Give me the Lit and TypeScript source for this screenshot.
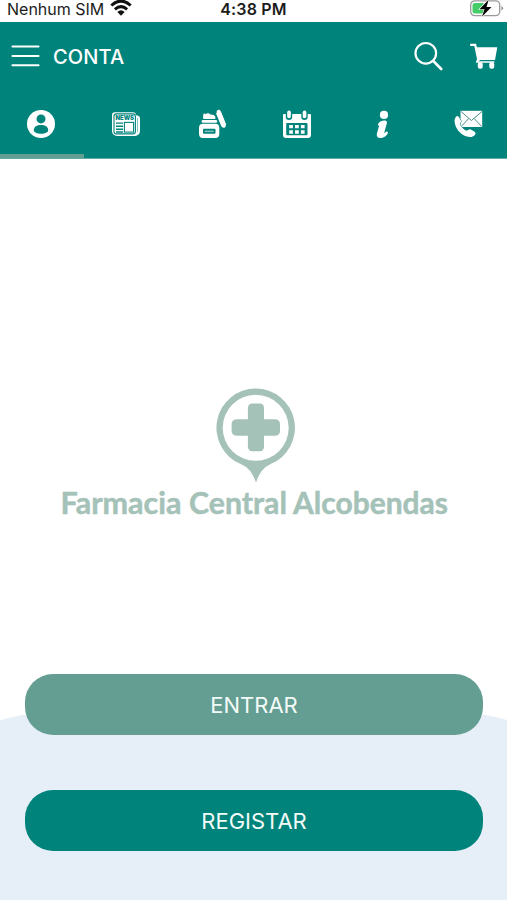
import { LitElement, html, css, svg } from "lit";
import { customElement, property, state } from "lit/decorators.js";
import { classMap } from "lit/directives/class-map.js";

// Tab icons share a 34x34 box centred in each tab.
const tabIcons = [
  {
    name: "Conta",
    art: svg`
      <circle cx="17" cy="17" r="14" fill="#fff"/>
      <circle cx="17" cy="11.9" r="4.5" fill="#00837b"/>
      <path d="M9.8 23.6c0-4 3-5.6 7.2-5.6s7.2 1.600 7.200 5.600c0 1.700-3.400 3.200-7.200 3.200s-7.200-1.500-7.200-3.200z" fill="#00837b"/>`,
  },
  {
    name: "Notícias",
    art: svg`
      <path d="M6 5.200H24a3 3 0 0 1 3 3q4 0 4 3.500V24a5 5 0 0 1-5 5H8a5 5 0 0 1-5-5V8.200a3 3 0 0 1 3-3z" fill="#fff"/>
      <rect x="5" y="6.900" width="21.400" height="20" rx="2.400" fill="none" stroke="#00837b" stroke-width="1.100"/>
      <path d="M28.500 11v14" stroke="#00837b" stroke-width=".5"/>
      <text x="6.500" y="13.200" textLength="18.500" lengthAdjust="spacingAndGlyphs" font-family="Inter, sans-serif" font-weight="900" font-size="6.500" fill="#00837b">NEWS</text>
      <path d="M7 16.100H14M7 19.200H14M7 22.300H14M7 25H14" stroke="#00837b" stroke-width="1.400"/>
      <rect x="15.400" y="15.400" width="9.200" height="9.700" fill="#fff" stroke="#00837b" stroke-width="1.100"/>`,
  },
  {
    name: "Produtos",
    art: svg`
      <path d="M4 20.500q0-3.800 4-3.800h12.300q4 0 4 3.800v6.300q0 4.200-4 4.200H8q-4 0-4-4.200z" fill="#fff"/>
      <rect x="6.600" y="13" width="15.600" height="2.700" rx="1.200" fill="#fff"/>
      <path d="M8.400 12L8 9.200 8.700 6.600 11.200 7 12 6.300h1.600l2 1.300 3.200.5 1.500 1.300V12z" fill="#fff"/>
      <path d="M23.400 5.300L28.900 18.800" stroke="#fff" stroke-width="5.200"/>
      <path d="M23.600 4.800l5.200 14" stroke="#fff" stroke-width="4" stroke-linecap="round"/>
      <rect x="8" y="21.800" width="12.500" height="5" rx="1" fill="#00837b"/>
      <rect x="9.700" y="23.600" width="9" height="1.500" fill="#7fc0bb"/>`,
  },
  {
    name: "Agenda",
    art: svg`
      <path d="M4 7H30a1 1 0 0 1 1 1V28a3 3 0 0 1-3 3H6a3 3 0 0 1-3-3V8a1 1 0 0 1 1-1z" fill="#fff"/>
      <rect x="5.800" y="2.600" width="6.400" height="10.300" rx="3.200" fill="#00837b"/>
      <rect x="21.300" y="2.600" width="6.400" height="10.300" rx="3.200" fill="#00837b"/>
      <rect x="7.200" y="3.500" width="3.600" height="7.800" rx="1.800" fill="#fff"/>
      <rect x="22.700" y="3.500" width="3.600" height="7.800" rx="1.800" fill="#fff"/>
      <rect x="6.200" y="16" width="21.300" height="12.300" rx="1" fill="#00837b"/>
      <path d="M9.200 19.600H24.600M9.200 25H24.600" stroke="#fff" stroke-width="3.300" stroke-dasharray="3.700 2.150"/>`,
  },
  {
    name: "Informação",
    art: svg`
      <circle cx="19" cy="7.900" r="4.100" fill="#fff"/>
      <path d="M13.200 16.800C14.800 14.300 17.600 13.200 20.200 13.600c1.700.3 2 1.500 1.600 3l-2.500 8.800c-.3 1 .4.500 1.100-.2.900-.9 2.300-.8 2.500.3.300 1.300-2.500 5-6.800 5.500-3.500.4-4.900-1.500-4.200-4.500l2.300-8c-1.200.4-1.700-.500-1-1.700z" fill="#fff"/>`,
  },
  {
    name: "Contacto",
    art: svg`
      <rect x="9.500" y="3.800" width="21.700" height="16.200" fill="#fff"/>
      <path d="M10 4.500L20.400 13.500 31 4.500M10.200 19.500L17.700 11.500M30.700 19.500L23.100 11.500" fill="none" stroke="#4a8f89" stroke-width="1"/>
      <path d="M5 9.700c1-.9 2-.8 2.800.2l2 3.300c.7 1.200.2 2-.8 3.100-.9 1.200 3.800 6.900 6.700 7.400 1.500-.6 2.600-1.700 4.100-1.200l3.800 2.300c1.200.9 1.300 1.900.2 3.100-1.800 2-4.500 2.700-7.800 1.700C9.500 27.500 4 21.300 3.600 14.400c-.1-1.900.4-3.600 1.400-4.700z" fill="#fff" stroke="#00837b" stroke-width=".8" paint-order="stroke"/>`,
  },
];

@customElement("status-bar")
class StatusBar extends LitElement {
  static styles = css`
    :host {
      display: grid;
      grid-template-columns: 1fr auto 1fr;
      height: 22px;
      color: #1c1c1c;
      font: 16px/18px Inter, sans-serif;
      white-space: nowrap;
      background: #fff;
    }
    .carrier { display: flex; padding-left: 7px; }
    .wifi { margin: 0 0 0 6px; width: 22px; height: 17px; }
    .time { font-weight: 600; letter-spacing: 0.2px; }
    .power { display: flex; justify-content: flex-end; padding-right: 3px; }
  `;
  render() {
    return html`
      <div class="carrier">
        <span>Nenhum SIM</span>
        <svg class="wifi" viewBox="0 0 22 17">
          <g fill="none" stroke="#111" stroke-width="3">
            <path d="M1.300 5.500Q11-3.300 20.700 5.500"/>
            <path d="M4.900 9.300Q11 3.900 17.100 9.300"/>
          </g>
          <path d="M7.300 11.900Q11 8.800 14.700 11.900L11 15.800z" fill="#111"/>
        </svg>
      </div>
      <span class="time">4:38 PM</span>
      <div class="power">
        <svg width="35" height="18" viewBox="0 0 35 18">
          <rect x="1.700" y=".8" width="29" height="14.800" rx="4" fill="#fff" stroke="#999" stroke-width="1.300"/>
          <path d="M6 3h9l-3.700 6H15v4.600H6a2.500 2.500 0 0 1-2.500-2.500V5.500A2.500 2.500 0 0 1 6 3z" fill="#43cc67"/>
          <path d="M32.400 6v4.500q1.800-.7 1.800-2.250T32.400 6z" fill="#999"/>
          <path d="M19.700-.4L10.500 9.200h5L12.900 16.800 22.500 7h-5z" fill="#050505" stroke="#fff" stroke-width="1.200" paint-order="stroke"/>
        </svg>
      </div>`;
  }
}

@customElement("app-header")
class AppHeader extends LitElement {
  static styles = css`
    :host {
      display: flex;
      align-items: center;
      box-sizing: border-box;
      height: 68px;
      padding: 0 8px 0 11px;
      color: #fff;
    }
    svg { display: block; }
    .title {
      margin-left: 13px;
      padding-top: 1px;
      flex: 1;
      font: 500 20px/24px Inter, sans-serif;
      letter-spacing: 0.15px;
    }
    .search { margin-right: 26px; }
  `;
  @property() heading = "";
  render() {
    return html`
      <svg width="29" height="24" viewBox="0 0 29 24">
        <path d="M1.500 2.500H27.500M1.500 12H27.500M1.500 21.300H27.500" stroke="#fff" stroke-width="2.100" stroke-linecap="round"/>
      </svg>
      <span class="title">${this.heading}</span>
      <svg class="search" width="30" height="30" viewBox="0 0 30 30">
        <circle cx="12.800" cy="12.300" r="10.300" fill="none" stroke="#fff" stroke-width="2.200"/>
        <path d="M20.300 20L28.200 28" stroke="#fff" stroke-width="2.600" stroke-linecap="round"/>
      </svg>
      <svg width="30" height="30" viewBox="0 0 30 30">
        <path d="M1.200 3.900H6.200L9.600 20.300" fill="none" stroke="#fff" stroke-width="2.200"/>
        <path d="M6.800 6.300H28.300L26 18.900H9.300z" fill="#fff"/>
        <path d="M9 17.500L7.800 20.900H25.300" fill="none" stroke="#fff" stroke-width="1.500"/>
        <rect x="8.800" y="21.200" width="4.900" height="6.500" rx="2" fill="#fff"/>
        <rect x="20.300" y="21.200" width="4.900" height="6.500" rx="2" fill="#fff"/>
      </svg>`;
  }
}

@customElement("tab-strip")
class TabStrip extends LitElement {
  static styles = css`
    :host { display: block; height: 68px; overflow: hidden; }
    .tabs {
      display: grid;
      grid-template-columns: 85.600px repeat(5, 85.350px);
      margin-left: -2px;
      height: 100%;
    }
    .tab {
      display: flex;
      justify-content: center;
      box-sizing: border-box;
      padding: 17px 0 0;
      border: 0;
      border-bottom: 4px solid transparent;
      background: none;
    }
    .active { border-bottom-color: #649d91; }
    svg { display: block; flex: none; }
  `;
  @state() selected = 0;
  render() {
    return html`<div class="tabs">
      ${tabIcons.map(
        (tab, i) => html`<button
          class=${classMap({ tab: true, active: i === this.selected })}
          aria-label=${tab.name}
          @click=${() => (this.selected = i)}
        >
          <svg width="34" height="34" viewBox="0 0 34 34">${tab.art}</svg>
        </button>`
      )}
    </div>`;
  }
}

@customElement("app-root")
class AppRoot extends LitElement {
  static styles = css`
    :host {
      display: flex;
      flex-direction: column;
      position: relative;
      height: 900px;
      overflow: hidden;
      background: #fff;
      font-family: Inter, sans-serif;
    }
    .top { background: #00837b; height: 136px; border-bottom: 1px solid #65aaa5; background-clip: padding-box; }
    .brand { display: flex; justify-content: center; padding-top: 227px; }
    .brand svg { display: block; }
    .wordmark {
      font: 700 30px Lato, "Open Sans", sans-serif;
      stroke: #a5c2b9;
      stroke-width: 0.5px;
    }
    .wave { position: absolute; left: 0; bottom: 0; z-index: 0; }
    .actions {
      position: relative;
      z-index: 1;
      display: flex;
      flex-direction: column;
      gap: 55px;
      margin: auto 24px 49px 25px;
    }
    .action {
      height: 61px;
      border: 0;
      border-radius: 28px;
      padding: 1px 0 0;
      color: #f3fbf9;
      font: 400 22px/26px Inter, sans-serif;
    }
    .enter { background: #649d91; }
    .register { background: #00837b; }
  `;
  render() {
    return html`
      <status-bar></status-bar>
      <div class="top">
        <app-header heading="CONTA"></app-header>
        <tab-strip></tab-strip>
      </div>
      <div class="brand">
        <svg width="440" height="150" viewBox="-20 0 440 150">
          <g fill="#a5c2b9">
            <path fill-rule="evenodd" d="M201.700 2.500a39.300 39.300 0 0 1 15 75.600Q206.500 82.500 202 96.500Q197.500 82.500 186.700 78.100A39.300 39.300 0 0 1 201.700 2.500zM201.700 8.800a33 33 0 1 0 0 66a33 33 0 1 0 0-66z"/>
            <path d="M198.400 17.500h7.600q4 0 4 5v10.800h10.500q5.500 0 5.500 5v6.500q0 5-5.500 5H210v10.500q0 5-4 5h-7.600q-4.500 0-4.500-5V49.800h-10.500q-5.800 0-5.800-5v-6.500q0-5 5.800-5h10.500V22.500q0-5 4.500-5z"/>
            <g class="wordmark">
              <text x="6.500" y="127.500" textLength="121" lengthAdjust="spacingAndGlyphs">Farmacia</text>
              <text x="135" y="127.500" textLength="98" lengthAdjust="spacingAndGlyphs">Central</text>
              <text x="239" y="127.500" textLength="155" lengthAdjust="spacingAndGlyphs">Alcobendas</text>
            </g>
          </g>
        </svg>
      </div>
      <svg class="wave" width="507" height="190" viewBox="0 0 507 190">
        <path d="M0 10.500Q12 6.500 28 4Q253-34 480 4Q495 6.500 507 10V190H0z" fill="#e6eef7"/>
      </svg>
      <div class="actions">
        <button class="action enter">ENTRAR</button>
        <button class="action register">REGISTAR</button>
      </div>`;
  }
}
